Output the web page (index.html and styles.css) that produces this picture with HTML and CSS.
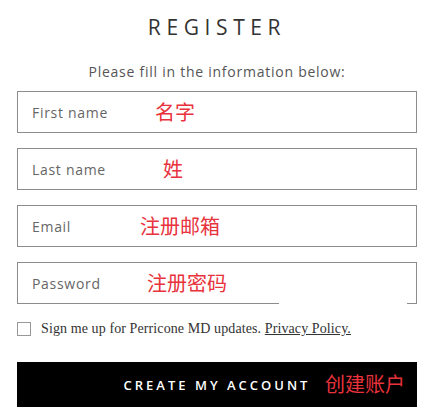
FILE: index.html
```html
<!DOCTYPE html>
<html lang="en">
<head>
<meta charset="utf-8">
<title>Register</title>
<link rel="stylesheet" href="styles.css">
</head>
<body>
<main class="page">
  <h1 class="title">REGISTER</h1>
  <p class="intro">Please fill in the information below:</p>
  <form class="form">
    <div class="field">
      <input class="input" type="text" placeholder="First name">
      <span class="note note-first">名字</span>
    </div>
    <div class="field">
      <input class="input" type="text" placeholder="Last name">
      <span class="note note-last">姓</span>
    </div>
    <div class="field">
      <input class="input" type="email" placeholder="Email">
      <span class="note note-email">注册邮箱</span>
    </div>
    <div class="field">
      <input class="input" type="password" placeholder="Password">
      <span class="note note-pass">注册密码</span>
      <span class="border-gap"></span>
    </div>
    <label class="optin">
      <input class="check" type="checkbox">
      <span class="optin-text">Sign me up for Perricone MD updates. <a class="policy" href="#">Privacy Policy.</a></span>
    </label>
    <button class="submit" type="button">
      <span class="submit-label">CREATE MY ACCOUNT</span>
      <span class="note note-btn">创建账户</span>
    </button>
  </form>
</main>
</body>
</html>
```
FILE: styles.css
```css
html, body {
  margin: 0;
  padding: 0;
  background: #ffffff;
}

.page {
  padding: 0 11px 0 17px;
  font-family: "Open Sans", "Noto Sans", sans-serif;
  color: #333;
}

.title {
  margin: 13px 0 0;
  font-size: 21px;
  font-weight: 400;
  line-height: 28px;
  letter-spacing: 5.6px;
  text-align: center;
  color: #333;
}

.intro {
  margin: 21px 0 0;
  font-size: 14px;
  line-height: 20px;
  letter-spacing: 0.75px;
  text-align: center;
  color: #555;
}

.form {
  display: flex;
  flex-direction: column;
  gap: 15px;
  margin-top: 9px;
}

.field {
  position: relative;
  height: 42px;
}

.input {
  box-sizing: border-box;
  width: 100%;
  height: 42px;
  margin: 0;
  padding: 0 14px;
  border: 1px solid #8c8c8c;
  border-radius: 0;
  background: #fff;
  font-family: "Open Sans", "Noto Sans", sans-serif;
  font-size: 14px;
  letter-spacing: 0.7px;
  color: #333;
  outline: none;
}

.input::placeholder {
  color: #666;
  opacity: 1;
}

.note {
  position: absolute;
  top: 9px;
  font-family: "Noto Sans CJK SC", sans-serif;
  font-size: 20px;
  line-height: 24px;
  letter-spacing: 0;
  color: #e8323c;
  pointer-events: none;
}

.note-first { left: 138px; }
.note-last { left: 146px; }
.note-email { left: 123px; }
.note-pass { left: 130px; }

.border-gap {
  position: absolute;
  left: 262px;
  bottom: 0;
  width: 128px;
  height: 1px;
  background: #fff;
}

.optin {
  display: flex;
  align-items: center;
  gap: 10px;
  height: 20px;
  margin-top: 0;
  font-family: "Liberation Serif", "Times New Roman", serif;
  font-size: 14px;
  letter-spacing: 0.1px;
  color: #333;
}

.check {
  appearance: none;
  -webkit-appearance: none;
  box-sizing: border-box;
  width: 14px;
  height: 14px;
  margin: 0;
  border: 1px solid #999;
  background: #fff;
}

.policy {
  color: #333;
  text-decoration: underline;
}

.submit {
  position: relative;
  display: flex;
  align-items: center;
  justify-content: center;
  height: 45px;
  margin-top: 8px;
  padding: 0;
  border: 0;
  background: #000;
  color: #fff;
  cursor: pointer;
}

.submit-label {
  font-family: "Open Sans", "Noto Sans", sans-serif;
  font-size: 13px;
  font-weight: 600;
  letter-spacing: 3px;
}

.note-btn {
  top: 10px;
  left: 308px;
}
```
